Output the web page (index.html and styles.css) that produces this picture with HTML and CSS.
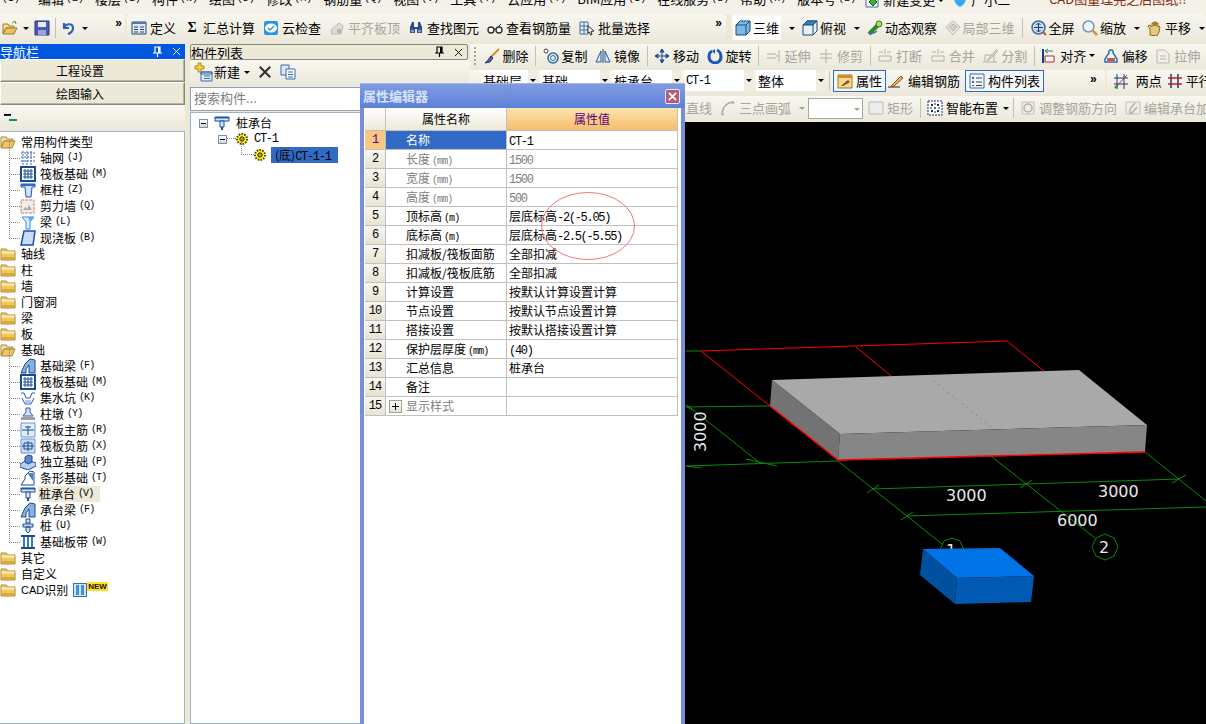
FILE: index.html
```html
<!DOCTYPE html>
<html lang="zh">
<head>
<meta charset="utf-8">
<title>属性编辑器</title>
<link rel="stylesheet" href="styles.css">
</head>
<body>
<svg class="sprite" xmlns="http://www.w3.org/2000/svg">
  <symbol id="f-open" viewBox="0 0 16 16"><path d="M1 3h5l1 2h6v2H4L1 13z" fill="#f6e3a0" stroke="#a8843a"/><path d="M1 14l3-7h11l-3 7z" fill="#efc463" stroke="#a8843a"/></symbol>
  <symbol id="f-closed" viewBox="0 0 16 16"><path d="M1 3h5l1 2h8v9H1z" fill="#f2c75c" stroke="#a88a3c"/><path d="M1.500 5.500h13v2h-13z" fill="#fbeeb8"/><path d="M2 11h12v2.500H2z" fill="#dca83a"/></symbol>
  <symbol id="i-grid" viewBox="0 0 16 16"><path d="M1 3h14M1 7h14M1 11h14M3 1v14M7 1v14M11 1v14" stroke="#3a68b8" fill="none" stroke-dasharray="2 1"/></symbol>
  <symbol id="i-raft" viewBox="0 0 16 16"><path d="M1 1h14v14H1z" fill="#fff" stroke="#1a4a90" stroke-width="2"/><path d="M3 5h10M3 8h10M3 11h10M5 3v10M8 3v10M11 3v10" stroke="#1a4a90"/></symbol>
  <symbol id="i-col" viewBox="0 0 16 16"><path d="M1 2h14v3h-3l-1 10H6L5 5H1z" fill="#cfe2f8" stroke="#1a5ab0"/><path d="M1 2h14v2H1z" fill="#2a6ac0"/></symbol>
  <symbol id="i-wall" viewBox="0 0 16 16"><path d="M1 2h13v13H1z" fill="#eee" stroke="#d08050" stroke-dasharray="3 1"/><path d="M3 12l2-3 2 2 2-4 3 5z" fill="#a8a8a8"/></symbol>
  <symbol id="i-beam" viewBox="0 0 16 16"><path d="M2 3h12l-4 5v7H6V8z" fill="#d8ebfb" stroke="#3a8ad8"/><path d="M8 3l5 0-3 5z" fill="#60a8e8"/></symbol>
  <symbol id="i-slab" viewBox="0 0 16 16"><path d="M4 1h11l-2 14H1z" fill="#c8ddf6" stroke="#1a50a8" stroke-width="1.500"/></symbol>
  <symbol id="i-fb" viewBox="0 0 16 16"><path d="M1 15l4-9 5-5 5 1v13H9V7l-3 4v4z" fill="#88b0e0" stroke="#1a4a90"/></symbol>
  <symbol id="i-sump" viewBox="0 0 16 16"><path d="M1 3h3l2 5h4l2-5h3M2 8l3 6h6l3-6" fill="none" stroke="#2a60b0"/><path d="M5 10h6v3H5z" fill="#b0c8e8"/></symbol>
  <symbol id="i-ped" viewBox="0 0 16 16"><path d="M6 2h4v4l3 4H3l3-4z" fill="#d8e4f4" stroke="#2a60b0"/><path d="M1 11h14v3H1z" fill="#a0a0a0"/></symbol>
  <symbol id="i-r1" viewBox="0 0 16 16"><path d="M1 1h14v14H1z" fill="#e0ecfa" stroke="#6a98d0"/><path d="M2 8h12M8 4v9M5 5h6" stroke="#1a4a90" fill="none"/></symbol>
  <symbol id="i-r2" viewBox="0 0 16 16"><path d="M1 1h14v14H1z" fill="#c8dcf4" stroke="#6a98d0"/><path d="M2 8h12M8 3v10M4 5h8v6H4z" stroke="#1a4a90" fill="none"/></symbol>
  <symbol id="i-iso" viewBox="0 0 16 16"><path d="M0 10l7-4 9 3v3l-8 4-8-3z" fill="#b8d0f0" stroke="#1a4a90"/><path d="M5 3l3-2 4 1v6l-4 2-3-2z" fill="#5a88c8" stroke="#1a4a90"/></symbol>
  <symbol id="i-strip" viewBox="0 0 16 16"><path d="M1 15l4-6V6l5-5 4 1v13z" fill="#fff" stroke="#1a4a90"/><path d="M8 3l5 0v8l-3-4z" fill="#4a80c8"/></symbol>
  <symbol id="i-cap" viewBox="0 0 16 16"><path d="M1 2h14v4H1z" fill="#d8e8fa" stroke="#1a4a90"/><path d="M1 2h14v1.500H1z" fill="#1a5ab0"/><path d="M6 6h4v6H6z" fill="#d8e8fa" stroke="#1a4a90"/><path d="M7 12h2v3H7z" fill="#1a4a90"/></symbol>
  <symbol id="i-pile" viewBox="0 0 16 16"><path d="M6 1h4v4H6zM3 6h10v3H3zM6 9h4v4l-2 2-2-2z" fill="#c8dcf4" stroke="#1a4a90"/></symbol>
  <symbol id="i-band" viewBox="0 0 16 16"><path d="M1 2h14M1 14h14" stroke="#1a4a90" stroke-width="2"/><path d="M4 3v10M8 3v10M12 3v10" stroke="#3a78c8" stroke-width="2"/></symbol>
  <symbol id="i-gear" viewBox="0 0 12 12"><circle cx="6" cy="6" r="5" fill="#ffff20" stroke="#504000" stroke-width="2" stroke-dasharray="1.600 1.200"/><circle cx="6" cy="6" r="2.200" fill="#c8a800" stroke="#302000"/></symbol>
  <symbol id="t-open" viewBox="0 0 16 16"><path d="M1 4h5l1 2h5v2H4L1 14z" fill="#f4dc96" stroke="#a07a30"/><path d="M1 14l3-6h11l-3 6z" fill="#ecc060" stroke="#a07a30"/><path d="M10 3l3-2 1 3" fill="none" stroke="#5a8a30"/></symbol>
  <symbol id="t-save" viewBox="0 0 16 16"><path d="M1 1h14v14H1z" fill="#4a5ab8" stroke="#2a3478"/><path d="M4 2h8v5H4z" fill="#e8ecf8"/><path d="M4 10h8v5H4z" fill="#9aa4d8"/></symbol>
  <symbol id="t-undo" viewBox="0 0 16 16"><path d="M3 3v5h5M3 8c2-5 9-5 9 0 0 3-2 5-5 6" fill="none" stroke="#2a62b8" stroke-width="2.200"/></symbol>
  <symbol id="t-def" viewBox="0 0 16 16"><path d="M1 2h14v12H1z" fill="#dfe8f4" stroke="#26486e"/><path d="M1 2h14v2H1z" fill="#5478a8"/><path d="M3 7h4M9 7h4M3 9.500h4M9 9.500h4M3 12h4M9 12h4" stroke="#26486e"/></symbol>
  <symbol id="t-cloud" viewBox="0 0 16 16"><path d="M1 3a2 2 0 0 1 2-2h10a2 2 0 0 1 2 2v10a2 2 0 0 1-2 2H3a2 2 0 0 1-2-2z" fill="#2a94e0"/><ellipse cx="8" cy="8" rx="6" ry="4.500" fill="#fff"/><path d="M5 8l2 2 4-4" fill="none" stroke="#2a94e0" stroke-width="1.500"/></symbol>
  <symbol id="t-align" viewBox="0 0 16 16"><path d="M2 10l8-7 4 3-2 8H3z" fill="#dcdcd4" stroke="#b8b8b0"/><path d="M8 9h4v4H8z" fill="#b8b8b0"/></symbol>
  <symbol id="t-bino" viewBox="0 0 16 16"><path d="M2 7l2-5h2v5h4V2h2l2 5v6h-5V9H7v4H2z" fill="#2a4a88"/><circle cx="4.500" cy="11" r="1.500" fill="#8ab0e0"/><circle cx="11.500" cy="11" r="1.500" fill="#8ab0e0"/></symbol>
  <symbol id="t-glass" viewBox="0 0 16 16"><circle cx="4" cy="10" r="3" fill="#fff" stroke="#303030" stroke-width="1.400"/><circle cx="12" cy="10" r="3" fill="#fff" stroke="#303030" stroke-width="1.400"/><path d="M7 9h2M11 7l3-3" stroke="#303030"/></symbol>
  <symbol id="t-batch" viewBox="0 0 16 16"><path d="M1 2h8v12H1zM1 6h8M1 10h8M5 2v12" fill="#eef2f8" stroke="#3a68a8"/><path d="M9 6l6 5-3 .500 1 3-1.500 .500-1-3-1.500 1z" fill="#fff" stroke="#303030"/></symbol>
  <symbol id="t-cube" viewBox="0 0 16 16"><path d="M1 5l4-4h10v10l-4 4H1z" fill="#7ab8e8" stroke="#1a4a78"/><path d="M1 5h10v10M11 5l4-4" fill="none" stroke="#1a4a78"/></symbol>
  <symbol id="t-top" viewBox="0 0 16 16"><path d="M1 5l4-4h10v10l-4 4H1z" fill="#e8f0fa" stroke="#1a4a78"/><path d="M1 5l4-4h10l-4 4z" fill="#3a80c8" stroke="#1a4a78"/><path d="M11 5v10M11 5l4-4" fill="none" stroke="#1a4a78"/></symbol>
  <symbol id="t-orbit" viewBox="0 0 16 16"><path d="M2 14l11-11" stroke="#2a8a30" stroke-width="4"/><circle cx="12" cy="4" r="3" fill="#b0e060" stroke="#3a7020"/><path d="M2 12c3 2 6 1 8-1" fill="none" stroke="#3a6ab0" stroke-width="1.500"/></symbol>
  <symbol id="t-local" viewBox="0 0 16 16"><path d="M1 7l7-6 7 6-7 8z" fill="#e8e8e0" stroke="#b8b8b0"/><path d="M4 7l4-3 4 3-4 4z" fill="#d0d0c8" stroke="#b8b8b0"/></symbol>
  <symbol id="t-full" viewBox="0 0 16 16"><circle cx="7.500" cy="7.500" r="6.500" fill="#c8dcf4" stroke="#4a6a98" stroke-width="1.500"/><path d="M7.500 3v9M3 7.500h9M7.500 3l-2 2M7.500 3l2 2M7.500 12l-2-2M7.500 12l2-2" stroke="#1a3a78" fill="none"/><path d="M12 12l3 3" stroke="#c05020" stroke-width="2"/></symbol>
  <symbol id="t-zoom" viewBox="0 0 16 16"><circle cx="6.500" cy="6.500" r="5.500" fill="#eef4fc" stroke="#7a94b8" stroke-width="1.500"/><path d="M10 10l5 5" stroke="#c89838" stroke-width="2.500"/></symbol>
  <symbol id="t-pan" viewBox="0 0 16 16"><path d="M3 15V9L1 6l2-1 2 2V3h2v3-4h2v4-3h2v4l1-1 1 1-1 5-2 4z" fill="#e8c880" stroke="#8a6820"/></symbol>
  <symbol id="t-del" viewBox="0 0 16 16"><path d="M15 1l-8 8" stroke="#d09030" stroke-width="2"/><path d="M7 8l2 2-3 4-5 1 1-1c2-1 2-3 5-6z" fill="#4a62a8" stroke="#2a3a78"/></symbol>
  <symbol id="t-copy" viewBox="0 0 16 16"><circle cx="3" cy="3" r="2" fill="#fff" stroke="#404040"/><circle cx="10" cy="10" r="5" fill="none" stroke="#2a68b0" stroke-width="1.500"/><circle cx="10" cy="10" r="2.500" fill="none" stroke="#2a68b0"/></symbol>
  <symbol id="t-mirror" viewBox="0 0 16 16"><path d="M8 1v14" stroke="#404040"/><path d="M6 3v11H1zM10 3v11h5z" fill="#dceafa" stroke="#1a58a8"/></symbol>
  <symbol id="t-move" viewBox="0 0 16 16"><path d="M8 1v14M1 8h14M8 1L6 4h4zM8 15l-2-3h4zM1 8l3-2v4zM15 8l-3-2v4z" stroke="#1a4a90" fill="#2a68b8"/></symbol>
  <symbol id="t-rot" viewBox="0 0 16 16"><path d="M5 3C1 5 1 12 5 14s9 0 9-5-2-6-4-7" fill="none" stroke="#1a58c0" stroke-width="3"/><path d="M8 1l-3 2 3 3z" fill="#1a58c0"/></symbol>
  <symbol id="t-ext" viewBox="0 0 16 16"><path d="M1 6h9M1 10h9M13 2v12M10 8h3" stroke="#b0b0a8" fill="none"/></symbol>
  <symbol id="t-trim" viewBox="0 0 16 16"><path d="M8 1v14M2 6h12M2 10h12" stroke="#b0b0a8" fill="none"/></symbol>
  <symbol id="t-brk" viewBox="0 0 16 16"><path d="M2 4h4M10 4h4M2 8h12v5H2z" stroke="#b0b0a8" fill="none"/><path d="M8 1v5" stroke="#b0b0a8"/></symbol>
  <symbol id="t-split" viewBox="0 0 16 16"><path d="M1 14h14M3 14V7h9v7" fill="none" stroke="#b0b0a8"/><path d="M15 1L7 10l-2 3 3-2 8-8" fill="#d8d8d0" stroke="#b0b0a8"/></symbol>
  <symbol id="t-alg" viewBox="0 0 16 16"><path d="M2 1v14" stroke="#1a3a88" stroke-width="2"/><path d="M4 3h8M7 1L4 3l3 2" stroke="#1a8a90" fill="none"/><path d="M4 8h9v6H4z" fill="#fff" stroke="#c02030"/></symbol>
  <symbol id="t-off" viewBox="0 0 16 16"><path d="M8 2a2 2 0 0 1 2 3l4 6v3H2v-3l4-6a2 2 0 0 1 2-3z" fill="#fff" stroke="#2a68b0" stroke-width="1.500"/><path d="M4 10h8v3H4z" fill="#d85040"/></symbol>
  <symbol id="t-str" viewBox="0 0 16 16"><path d="M2 2h8l4 4v9H2z" fill="#f0f0e8" stroke="#b8b8b0"/><path d="M5 8h6M5 11h6" stroke="#b8b8b0"/></symbol>
  <symbol id="t-prop" viewBox="0 0 16 16"><path d="M1 2h14v13H1z" fill="#f8d890" stroke="#a07820"/><path d="M1 2h14v3H1z" fill="#c89028"/><path d="M4 13l7-6 2 2-7 4z" fill="#705020"/></symbol>
  <symbol id="t-pen" viewBox="0 0 16 16"><path d="M0 14h12" stroke="#202020"/><path d="M4 12l9-9 2 2-9 8-3 1z" fill="#f0b860" stroke="#805020"/></symbol>
  <symbol id="t-list" viewBox="0 0 16 16"><path d="M1 1h14v14H1z" fill="#f4f8fc" stroke="#3a6aa8"/><path d="M3 4h2v2H3zM3 8h2v2H3zM3 12h2v1H3z" fill="#3a6aa8"/><path d="M7 5h6M7 9h6M7 12.500h6" stroke="#404040"/></symbol>
  <symbol id="t-two" viewBox="0 0 16 16"><path d="M4 1v15M11 1v15M1 5h14M1 11h14" stroke="#1a3a78"/><path d="M2 15L14 2" stroke="#d02020"/><circle cx="3" cy="14" r="1.500" fill="#20a020"/></symbol>
  <symbol id="t-par" viewBox="0 0 16 16"><path d="M4 1v14M11 1v14" stroke="#1a3a78" stroke-width="1.500"/><path d="M1 5h14M1 11h14" stroke="#c02020" stroke-width="1.500"/></symbol>
  <symbol id="t-arc" viewBox="0 0 16 16"><path d="M2 15C2 8 6 3 13 2" fill="none" stroke="#a8a8a0" stroke-width="1.500"/><circle cx="2.500" cy="14" r="1.500" fill="#b8b8b0"/><circle cx="13" cy="2.500" r="1.500" fill="#b8b8b0"/></symbol>
  <symbol id="t-rect" viewBox="0 0 16 16"><path d="M1 2h14v12H1z" fill="#ececec" stroke="#b8b8b0"/></symbol>
  <symbol id="t-smart" viewBox="0 0 16 16"><path d="M1 1h14v14H1z" fill="#fff" stroke="#103070" stroke-dasharray="2 1"/><path d="M8 3v10M3 8h10" stroke="#303030" stroke-dasharray="2 2"/><path d="M4 4h2v2H4zM10 4h2v2h-2zM4 10h2v2H4zM10 10h2v2h-2z" fill="#103070"/></symbol>
  <symbol id="t-adj" viewBox="0 0 16 16"><path d="M2 2h12v12H2z" fill="#eeeee6" stroke="#c0c0b8"/><circle cx="8" cy="8" r="4" fill="none" stroke="#b0b0a8" stroke-width="1.500"/></symbol>
  <symbol id="t-edit" viewBox="0 0 16 16"><path d="M1 2h14v12H1z" fill="#eeeee6" stroke="#c0c0b8"/><path d="M10 3L5 9v4h2l5-6" fill="none" stroke="#b0b0a8" stroke-width="1.500"/></symbol>
  <symbol id="t-new" viewBox="0 0 20 20"><path d="M5 1h3v3h3v3H8v3H5V7H2V4h3z" fill="#f0d040" stroke="#a89020"/><path d="M8 10h11v9H8z" fill="#e0ecf8" stroke="#3a6aa8"/><path d="M8 10h11v2H8zM11 14h6M11 16.500h6" stroke="#3a6aa8" fill="none"/></symbol>
  <symbol id="t-x" viewBox="0 0 16 16"><path d="M2 2l12 12M14 2L2 14" stroke="#303030" stroke-width="2.400"/></symbol>
  <symbol id="t-dup" viewBox="0 0 16 16"><path d="M1 1h8v10H1z" fill="#dce8f8" stroke="#3a6aa8"/><path d="M6 5h9v10H6z" fill="#fff" stroke="#3a6aa8"/><path d="M8 8h5M8 10.500h5M8 13h5" stroke="#3a6aa8"/></symbol>
  <symbol id="t-var" viewBox="0 0 16 16"><path d="M2 1h9l3 3v11H2z" fill="#fff" stroke="#3a6aa8"/><path d="M9 6l4 4-4 4-4-4z" fill="#40b030" stroke="#206018"/></symbol>
  <symbol id="t-bot" viewBox="0 0 16 16"><path d="M2 2h12c1 5-1 11-6 13C3 13 1 7 2 2z" fill="#38a8f0"/><circle cx="5.500" cy="6.500" r="1.200" fill="#fff"/><circle cx="10.500" cy="6.500" r="1.200" fill="#fff"/></symbol>
  <symbol id="i-nav" viewBox="0 0 16 16"><path d="M1 3h7v2H1z" fill="#103838"/><path d="M1 3h7v1H1z" fill="#000"/><path d="M6 8h8v2H6z" fill="#108878"/></symbol>
  <symbol id="i-pin" viewBox="0 0 10 12"><path d="M3 1h5v6H3zM1 7h9M5.500 7v4" fill="none" stroke="currentColor" stroke-width="1.200"/><path d="M6 1h2v6H6z" fill="currentColor"/></symbol>
  <symbol id="i-close" viewBox="0 0 10 10"><path d="M1 1l8 8M9 1l-8 8" stroke="currentColor" fill="none"/></symbol>
</svg>

<div class="app">
  <div class="menubar">
    <span class="mi mi-first"><span class="m">(I)</span></span>
    <span class="mi">编辑<span class="m">(E)</span></span>
    <span class="mi">楼层<span class="m">(L)</span></span>
    <span class="mi">构件<span class="m">(N)</span></span>
    <span class="mi">绘图<span class="m">(D)</span></span>
    <span class="mi">修改<span class="m">(M)</span></span>
    <span class="mi">钢筋量<span class="m">(Q)</span></span>
    <span class="mi">视图<span class="m">(V)</span></span>
    <span class="mi">工具<span class="m">(T)</span></span>
    <span class="mi">云应用<span class="m">(Y)</span></span>
    <span class="mi">BIM应用<span class="m">(I)</span></span>
    <span class="mi">在线服务<span class="m">(S)</span></span>
    <span class="mi">帮助<span class="m">(H)</span></span>
    <span class="mi">版本号<span class="m">(B)</span></span>
    <span class="mi mi-ic"><svg class="ic"><use href="#t-var"/></svg>新建变更<span class="drop"></span></span>
    <span class="mi mi-ic"><svg class="ic"><use href="#t-bot"/></svg>广小二</span>
    <span class="notice">CAD图量理完之后图纸!!</span>
  </div>

  <div class="topbar">
    <div class="band b-file">
      <svg class="ic ml2"><use href="#t-open"/></svg><span class="drop"></span>
      <svg class="ic"><use href="#t-save"/></svg><span class="vsep"></span>
      <svg class="ic"><use href="#t-undo"/></svg><span class="drop"></span>
      <span class="more more-file">»</span>
    </div>
    <div class="band b-main">
      <span class="ti"><svg class="ic"><use href="#t-def"/></svg>定义</span>
      <span class="ti"><span class="sigma">Σ</span>汇总计算</span>
      <span class="ti"><svg class="ic"><use href="#t-cloud"/></svg>云检查</span>
      <span class="ti off"><svg class="ic"><use href="#t-align"/></svg>平齐板顶</span>
      <span class="ti"><svg class="ic"><use href="#t-bino"/></svg>查找图元</span>
      <span class="ti"><svg class="ic"><use href="#t-glass"/></svg>查看钢筋量</span>
      <span class="ti"><svg class="ic"><use href="#t-batch"/></svg>批量选择</span>
      <span class="more more-end">»</span>
    </div>
    <div class="band b-view">
      <span class="ti pressed"><svg class="ic"><use href="#t-cube"/></svg>三维</span><span class="drop"></span>
      <span class="ti"><svg class="ic"><use href="#t-top"/></svg>俯视</span><span class="drop"></span>
      <span class="ti"><svg class="ic"><use href="#t-orbit"/></svg>动态观察</span>
      <span class="ti off"><svg class="ic"><use href="#t-local"/></svg>局部三维</span>
      <span class="vsep"></span>
      <span class="ti"><svg class="ic"><use href="#t-full"/></svg>全屏</span>
      <span class="ti"><svg class="ic"><use href="#t-zoom"/></svg>缩放</span><span class="drop"></span>
      <span class="ti"><svg class="ic"><use href="#t-pan"/></svg>平移</span><span class="drop"></span>
    </div>
  </div>

  <div class="work">
    <aside class="nav">
      <div class="panel-title active"><span class="pt">导航栏</span><svg class="pin"><use href="#i-pin"/></svg><svg class="cls"><use href="#i-close"/></svg></div>
      <button class="navbtn" type="button">工程设置</button>
      <button class="navbtn" type="button">绘图输入</button>
      <div class="navstrip"><svg class="ic"><use href="#i-nav"/></svg></div>
      <div class="navtree">
        <div class="tr"><svg class="ic"><use href="#f-open"/></svg>常用构件类型</div>
        <div class="tr ch"><svg class="ic"><use href="#i-grid"/></svg>轴网<span class="k">(J)</span></div>
        <div class="tr ch"><svg class="ic"><use href="#i-raft"/></svg>筏板基础<span class="k">(M)</span></div>
        <div class="tr ch"><svg class="ic"><use href="#i-col"/></svg>框柱<span class="k">(Z)</span></div>
        <div class="tr ch"><svg class="ic"><use href="#i-wall"/></svg>剪力墙<span class="k">(Q)</span></div>
        <div class="tr ch"><svg class="ic"><use href="#i-beam"/></svg>梁<span class="k">(L)</span></div>
        <div class="tr ch last"><svg class="ic"><use href="#i-slab"/></svg>现浇板<span class="k">(B)</span></div>
        <div class="tr"><svg class="ic"><use href="#f-closed"/></svg>轴线</div>
        <div class="tr"><svg class="ic"><use href="#f-closed"/></svg>柱</div>
        <div class="tr"><svg class="ic"><use href="#f-closed"/></svg>墙</div>
        <div class="tr"><svg class="ic"><use href="#f-closed"/></svg>门窗洞</div>
        <div class="tr"><svg class="ic"><use href="#f-closed"/></svg>梁</div>
        <div class="tr"><svg class="ic"><use href="#f-closed"/></svg>板</div>
        <div class="tr"><svg class="ic"><use href="#f-open"/></svg>基础</div>
        <div class="tr ch"><svg class="ic"><use href="#i-fb"/></svg>基础梁<span class="k">(F)</span></div>
        <div class="tr ch"><svg class="ic"><use href="#i-raft"/></svg>筏板基础<span class="k">(M)</span></div>
        <div class="tr ch"><svg class="ic"><use href="#i-sump"/></svg>集水坑<span class="k">(K)</span></div>
        <div class="tr ch"><svg class="ic"><use href="#i-ped"/></svg>柱墩<span class="k">(Y)</span></div>
        <div class="tr ch"><svg class="ic"><use href="#i-r1"/></svg>筏板主筋<span class="k">(R)</span></div>
        <div class="tr ch"><svg class="ic"><use href="#i-r2"/></svg>筏板负筋<span class="k">(X)</span></div>
        <div class="tr ch"><svg class="ic"><use href="#i-iso"/></svg>独立基础<span class="k">(P)</span></div>
        <div class="tr ch"><svg class="ic"><use href="#i-strip"/></svg>条形基础<span class="k">(T)</span></div>
        <div class="tr ch"><svg class="ic"><use href="#i-cap"/></svg><span class="hl">桩承台<span class="k">(V)</span></span></div>
        <div class="tr ch"><svg class="ic"><use href="#i-fb"/></svg>承台梁<span class="k">(F)</span></div>
        <div class="tr ch"><svg class="ic"><use href="#i-pile"/></svg>桩<span class="k">(U)</span></div>
        <div class="tr ch last"><svg class="ic"><use href="#i-band"/></svg>基础板带<span class="k">(W)</span></div>
        <div class="tr"><svg class="ic"><use href="#f-closed"/></svg>其它</div>
        <div class="tr"><svg class="ic"><use href="#f-closed"/></svg>自定义</div>
        <div class="tr"><svg class="ic"><use href="#f-closed"/></svg><span class="cad">CAD</span>识别<span class="cadbox"><i></i><i></i></span><span class="newtag">NEW</span></div>
      </div>
    </aside>

    <section class="list">
      <div class="panel-title plain"><span class="pt">构件列表</span><svg class="pin"><use href="#i-pin"/></svg><svg class="cls"><use href="#i-close"/></svg></div>
      <div class="listbar">
        <svg class="ic20"><use href="#t-new"/></svg><span class="newlbl">新建</span><span class="drop"></span>
        <svg class="ic"><use href="#t-x"/></svg>
        <svg class="ic"><use href="#t-dup"/></svg>
      </div>
      <div class="search">搜索构件...</div>
      <div class="listtree">
        <div class="lr l0"><span class="box"></span><svg class="ic"><use href="#i-cap"/></svg><span>桩承台</span></div>
        <div class="lr l1"><span class="box"></span><svg class="gear"><use href="#i-gear"/></svg><span class="mono">CT-1</span></div>
        <div class="lr l2"><svg class="gear"><use href="#i-gear"/></svg><span class="sel-item">(底)<span class="mono">CT-1-1</span></span></div>
      </div>
    </section>

    <section class="right">
      <div class="rowbar r2">
        <span class="grip"></span>
        <span class="ti"><svg class="ic"><use href="#t-del"/></svg>删除</span><span class="vsep"></span>
        <span class="ti"><svg class="ic"><use href="#t-copy"/></svg>复制</span>
        <span class="ti"><svg class="ic"><use href="#t-mirror"/></svg>镜像</span><span class="vsep"></span>
        <span class="ti"><svg class="ic"><use href="#t-move"/></svg>移动</span>
        <span class="ti"><svg class="ic"><use href="#t-rot"/></svg>旋转</span><span class="vsep"></span>
        <span class="ti off"><svg class="ic"><use href="#t-ext"/></svg>延伸</span>
        <span class="ti off"><svg class="ic"><use href="#t-trim"/></svg>修剪</span><span class="vsep"></span>
        <span class="ti off"><svg class="ic"><use href="#t-brk"/></svg>打断</span>
        <span class="ti off"><svg class="ic"><use href="#t-brk"/></svg>合并</span>
        <span class="ti off"><svg class="ic"><use href="#t-split"/></svg>分割</span><span class="vsep"></span>
        <span class="ti"><svg class="ic"><use href="#t-alg"/></svg>对齐<span class="drop"></span></span>
        <span class="ti"><svg class="ic"><use href="#t-off"/></svg>偏移</span>
        <span class="ti off"><svg class="ic"><use href="#t-str"/></svg>拉伸</span>
      </div>
      <div class="rowbar r3">
        <span class="sel s1">基础层<span class="arrow"></span></span>
        <span class="sel s2">基础<span class="arrow"></span></span>
        <span class="sel s2">桩承台<span class="arrow"></span></span>
        <span class="sel s2"><span class="mono">CT-1</span><span class="arrow"></span></span>
        <span class="sel s2">整体<span class="arrow"></span></span>
        <span class="vsep"></span>
        <span class="ti act"><svg class="ic"><use href="#t-prop"/></svg>属性</span>
        <span class="ti tight"><svg class="ic"><use href="#t-pen"/></svg>编辑钢筋</span>
        <span class="ti act"><svg class="ic"><use href="#t-list"/></svg>构件列表</span>
        <span class="more more-r3">»</span>
        <span class="bandgap"></span>
        <span class="ti wide"><svg class="ic"><use href="#t-two"/></svg>两点</span>
        <span class="ti"><svg class="ic"><use href="#t-par"/></svg>平行</span>
      </div>
      <div class="rowbar r4">
        <span class="ti off">直线</span>
        <span class="ti off"><svg class="ic"><use href="#t-arc"/></svg>三点画弧<span class="drop dis"></span></span>
        <span class="sel s3"><span class="arrow dis"></span></span>
        <span class="ti off"><svg class="ic"><use href="#t-rect"/></svg>矩形</span><span class="vsep"></span>
        <span class="ti"><svg class="ic"><use href="#t-smart"/></svg>智能布置<span class="drop"></span></span><span class="vsep"></span>
        <span class="ti off"><svg class="ic"><use href="#t-adj"/></svg>调整钢筋方向</span>
        <span class="ti off"><svg class="ic"><use href="#t-edit"/></svg>编辑承台加</span>
      </div>
      <div class="canvas">
        <svg class="scene" viewBox="470 122 736 602" xmlns="http://www.w3.org/2000/svg">
          <g class="gl">
            <path d="M686 351L701 351M686 407L770 406M686 466L838 461M687 405L760 463M746 459L777 466M686 466L701 468"/>
            <path d="M838 461L942 544M992 457L1095 538M1145 452L1206 501M873 489L1180 479M907 516L1206 507"/>
            <path d="M867 493L879 485M1020 488L1032 480M1172 483L1186 475M901 520L913 512M683 404L692 410"/>
            <polygon points="1105,534 1114,538 1118,547 1114,556 1105,560 1096,556 1092,547 1096,538"/>
            <polygon points="952,538 960,541 964,550 960,559 952,562 944,559 940,550 944,541"/>
          </g>
          <g class="rd">
            <path d="M701 351L1007 341L1044 371M856 347L891 376M701 351L770 406L838 460L1145 452"/>
          </g>
          <polygon points="772,380 1079,370 1147,425 840,434" fill="#a9a9a9"/>
          <polygon points="772,380 840,434 838,460 770,406" fill="#737373"/>
          <polygon points="840,434 1147,425 1145,452 838,460" fill="#868686"/>
          <path d="M934 381L995 430" class="dots"/>
          <path d="M770 406L838 460L1145 452" class="rd rd2"/>
          <text class="lb" x="946" y="501">3000</text>
          <text class="lb" x="1098" y="497">3000</text>
          <text class="lb" x="1057" y="526">6000</text>
          <text class="lb" x="1099" y="553">2</text>
          <text class="lb" x="946" y="556">1</text>
          <text class="lb" transform="translate(706 452) rotate(-90)">3000</text>
          <polygon points="923,549 1000,548 1034,576 957,578" fill="#0073e6"/>
          <polygon points="923,549 957,578 955,604 920,575" fill="#0050a0"/>
          <polygon points="957,578 1034,576 1031,602 955,604" fill="#005ab4"/>
        </svg>
      </div>
    </section>
  </div>

  <div class="dialog">
    <div class="dlg-title"><span>属性编辑器</span><span class="dlg-x"><svg><use href="#i-close"/></svg></span></div>
    <div class="dlg-body">
      <table class="props">
        <colgroup><col class="c0"><col class="c1"><col class="c2"></colgroup>
        <thead><tr><th></th><th>属性名称</th><th class="hv">属性值</th></tr></thead>
        <tbody>
          <tr class="cur"><td class="n">1</td><td class="p">名称</td><td class="v"><span class="mono">CT-1</span></td></tr>
          <tr class="ro"><td class="n">2</td><td class="p">长度<span class="k">(mm)</span></td><td class="v"><span class="mono">1500</span></td></tr>
          <tr class="ro"><td class="n">3</td><td class="p">宽度<span class="k">(mm)</span></td><td class="v"><span class="mono">1500</span></td></tr>
          <tr class="ro"><td class="n">4</td><td class="p">高度<span class="k">(mm)</span></td><td class="v"><span class="mono">500</span></td></tr>
          <tr><td class="n">5</td><td class="p">顶标高<span class="k">(m)</span></td><td class="v">层底标高<span class="mono">-2(-5.05)</span></td></tr>
          <tr><td class="n">6</td><td class="p">底标高<span class="k">(m)</span></td><td class="v">层底标高<span class="mono">-2.5(-5.55)</span></td></tr>
          <tr><td class="n">7</td><td class="p">扣减板/筏板面筋</td><td class="v">全部扣减</td></tr>
          <tr><td class="n">8</td><td class="p">扣减板/筏板底筋</td><td class="v">全部扣减</td></tr>
          <tr><td class="n">9</td><td class="p">计算设置</td><td class="v">按默认计算设置计算</td></tr>
          <tr><td class="n">10</td><td class="p">节点设置</td><td class="v">按默认节点设置计算</td></tr>
          <tr><td class="n">11</td><td class="p">搭接设置</td><td class="v">按默认搭接设置计算</td></tr>
          <tr><td class="n">12</td><td class="p">保护层厚度<span class="k">(mm)</span></td><td class="v"><span class="mono">(40)</span></td></tr>
          <tr><td class="n">13</td><td class="p">汇总信息</td><td class="v">桩承台</td></tr>
          <tr><td class="n">14</td><td class="p">备注</td><td class="v"></td></tr>
          <tr class="ro"><td class="n">15</td><td class="p"><span class="plus"></span>显示样式</td><td class="v"></td></tr>
        </tbody>
      </table>
    </div>
    <svg class="mark" viewBox="0 0 96 70"><ellipse cx="48" cy="35" rx="46.500" ry="33.500"/></svg>
  </div>
</div>
</body>
</html>
```
FILE: styles.css
```css
* { box-sizing: border-box; }
html, body { margin: 0; padding: 0; background: #ece9d8; }
body { font: 13px/16px "Noto Sans CJK SC", "Liberation Sans", sans-serif; color: #000; }
.sprite { position: absolute; width: 0; height: 0; overflow: hidden; }
.app { position: relative; width: 1206px; height: 724px; overflow: hidden; background: #ece9d8; display: flex; flex-direction: column; }
.ic { width: 16px; height: 16px; flex: none; display: block; }
.ic20 { width: 20px; height: 20px; flex: none; display: block; }
.m { font: 10px/16px "Liberation Mono", monospace; margin-left: 2px; }
.k { font: 10px/16px "Liberation Mono", monospace; letter-spacing: -.9px; margin-left: 2px; }
.mono { font: 12px/16px "Liberation Mono", monospace; letter-spacing: -1.300px; }
.ml2 { margin-left: 2px; }

/* menu */
.menubar { height: 14px; flex: none; display: flex; align-items: flex-start; gap: 11px; background: #f4f2e8; overflow: hidden; white-space: nowrap; position: relative; }
.mi { display: flex; align-items: center; margin-top: -9px; height: 16px; line-height: 16px; }
.mi-first { width: 27px; }
.mi-ic { gap: 3px; margin-top: -8px; }
.mi-ic:nth-last-child(3) { margin-left: -3px; }
.mi-ic:nth-last-child(2) { margin-left: -3px; }
.notice { position: absolute; left: 1049px; top: -9px; font-size: 13px; color: #8a2a10; }

/* bands */
.topbar { height: 30px; flex: none; display: flex; gap: 2px; }
.band { height: 28px; display: flex; align-items: center; background: linear-gradient(#f8f7f0, #ebe8da); border-radius: 3px; white-space: nowrap; }
.b-file { width: 125px; flex: none; gap: 5px; }
.b-main { width: 599px; flex: none; padding-left: 4px; gap: 8px; }
.b-view { flex: 1; min-width: 0; padding-left: 2px; gap: 7.500px; margin-left: 3px; }
.ti { display: flex; align-items: center; gap: 3px; height: 22px; white-space: nowrap; flex: none; }
.b-view .ti { gap: 2px; }
.ti.off { color: #a6a49a; }
.sigma { width: 16px; text-align: center; font: bold 14px/16px "Liberation Serif", serif; }
.more { font: bold 12px/12px "Liberation Sans", sans-serif; align-self: flex-start; margin-top: 3px; }
.more-file { margin-left: auto; margin-right: 3px; }
.more-end { margin-left: auto; margin-right: 4px; }
.drop { width: 6px; height: 0; flex: none; border: 3px solid transparent; border-top: 3px solid #000; border-bottom: 0; }
.drop.dis { border-top-color: #a6a49a; margin-left: 5px; }
.vsep { width: 1px; height: 20px; flex: none; background: #c4c1b0; }
.pressed { background: #fff; padding: 0 2px; height: 24px; }

/* main */
.work { flex: 1; display: flex; min-height: 0; }
.nav { width: 185px; flex: none; display: flex; flex-direction: column; }
.panel-title { height: 15px; flex: none; display: flex; align-items: center; overflow: hidden; }
.panel-title .pt { flex: 1; font-size: 13px; line-height: 15px; }
.panel-title.active { background: #0058e0; color: #fff; }
.panel-title.plain { background: #ece9d8; border: 1px solid #8a8878; border-radius: 2px; height: 16px; margin-right: 2px; }
.pin { width: 10px; height: 12px; margin-right: 10px; flex: none; }
.cls { width: 9px; height: 9px; margin-right: 4px; flex: none; }
.navbtn { height: 23px; flex: none; font: 12px/18px "Noto Sans CJK SC", sans-serif; background: #ece9d8; color: #000; padding: 0 25px 0 0; border: 1px solid; border-color: #fff #8a8878 #8a8878 #fff; box-shadow: inset -1px -1px 0 #b8b5a4; }
.navstrip { height: 26px; flex: none; padding: 6px 0 0 3px; background: linear-gradient(#f8f7f0, #ebe8da); }
.navtree { flex: 1; background: #fff; border: 1px solid #9eb2c8; border-left: 0; font-size: 12px; padding-top: 2px; overflow: hidden; }
.tr { position: relative; display: flex; align-items: center; gap: 5px; height: 16px; white-space: nowrap; }
.tr.ch { padding-left: 20px; gap: 4px; }
.tr .k { margin-left: -1px; }
.tr.ch::before { content: ""; position: absolute; left: 9px; top: -8px; height: 16px; width: 10px; border-left: 1px dotted #8a8a80; border-bottom: 1px dotted #8a8a80; }
.hl { background: #ece9d8; display: flex; align-items: center; height: 16px; padding: 0 7px 0 1px; margin-left: -2px; gap: 3px; }
.hl .k { margin-left: 0; }
.cad { font: 11px/16px "Liberation Sans", sans-serif; margin-right: -5px; }
.cadbox { width: 14px; height: 14px; border: 1px solid #4a6a98; background: #cfe4fa; display: flex; gap: 2px; padding: 1px 2px; flex: none; }
.cadbox i { flex: 1; background: #4090e0; }
.newtag { font: bold 8px/9px "Liberation Sans", sans-serif; background: #ffe020; color: #101010; padding: 0 1px; align-self: flex-start; margin-left: -5px; }

.list { width: 280px; margin-left: 5px; flex: none; display: flex; flex-direction: column; }
.listbar { height: 26px; flex: none; display: flex; align-items: center; padding: 0 0 2px 3px; background: linear-gradient(#f8f7f0, #ebe8da); border-radius: 3px; }
.newlbl { margin-left: 1px; }
.listbar .drop { margin: 0 8px 0 4px; }
.listbar .ic { width: 14px; height: 14px; }
.listbar .ic + .ic { margin-left: 8px; width: 16px; height: 16px; }
.search { height: 24px; flex: none; margin-top: 1px; background: #fff; border: 1px solid #8aa0b8; color: #808080; font-size: 13px; line-height: 20px; padding-left: 3px; }
.listtree { flex: 1; margin-top: 1px; background: #fff; border: 1px solid #9eb2c8; font-size: 12px; padding-top: 2px; }
.lr { position: relative; display: flex; align-items: center; height: 16px; white-space: nowrap; }
.box { width: 9px; height: 9px; flex: none; border: 1px solid #7a90a8; background: linear-gradient(#fff, #d8d4c4); position: relative; }
.box::after { content: ""; position: absolute; left: 1px; right: 1px; top: 3px; height: 1px; background: #000; }
.l0 { padding-left: 8px; gap: 6px; }
.l1 { padding-left: 27px; }
.l1 .gear { margin-left: 9px; margin-right: 6px; }
.l2 { padding-left: 63px; }
.l1::before { content: ""; position: absolute; left: 36px; top: 7px; width: 9px; border-top: 1px dotted #8a8a80; }
.l2::before { content: ""; position: absolute; left: 50px; top: -6px; height: 13px; width: 12px; border-left: 1px dotted #8a8a80; border-bottom: 1px dotted #8a8a80; }
.gear { width: 12px; height: 12px; flex: none; }
.l2 .gear { margin-right: 5px; }
.sel-item { background: #316ac5; color: #000; height: 16px; padding: 0 6px 0 4px; width: 67px; }

.right { flex: 1; display: flex; flex-direction: column; min-width: 0; }
.rowbar { height: 26px; flex: none; display: flex; align-items: center; white-space: nowrap; overflow: hidden; background: linear-gradient(#f8f7f0, #ebe8da); }
.r2 { padding: 0 0 3px 4px; gap: 7.500px; }
.r2 .vsep { margin: 0 -1px; }
.grip { width: 2px; height: 18px; flex: none; border-left: 2px dotted #a8a698; }
.r3 { padding: 0 0 5px 11px; gap: 2px; }
.sel { height: 21px; background: #fff; display: flex; align-items: center; justify-content: space-between; padding-left: 2px; flex: none; }
.s1 { width: 57px; }
.s2 { width: 70px; }
.s3 { width: 55px; height: 21px; border: 1px solid #a8a698; justify-content: flex-end; margin: 0 -3px 0 -5px; }
.arrow { width: 10px; height: 100%; flex: none; background: #f0eee2; position: relative; }
.arrow::after { content: ""; position: absolute; left: 2px; top: 9px; border: 3px solid transparent; border-top: 3px solid #000; border-bottom: 0; }
.arrow.dis { background: none; }
.arrow.dis::after { border-top-color: #a6a49a; }
.r3 .vsep { margin: 0 1px; }
.act { border: 1px solid #316ac5; background: #f4f6f8; padding: 0 3px; gap: 3px; }
.tight { gap: 4px; margin: 0 3px 0 0; }
.more-r3 { margin-left: 44px; }
.bandgap { width: 2px; height: 26px; background: #ece9d8; margin: 0 4px 0 6px; flex: none; }
.r3 .wide { gap: 7px; margin-right: 3px; }
.r4 { padding: 0 0 2px 216px; gap: 8px; }
.r4 .vsep { margin: 0 -2px 0 -1px; }
.r4 .ti .drop:not(.dis) { margin: 0 -3px 0 2px; }
.canvas { flex: 1; background: #000; position: relative; min-height: 0; }
.scene { display: block; width: 100%; height: 100%; }
.gl { fill: none; stroke: #0a8a0a; stroke-width: 1; }
.rd { fill: none; stroke: #ff0000; stroke-width: 1; }
.rd2 { stroke-width: 1.400; }
.dots { fill: none; stroke: #6a6a6a; stroke-width: 1; stroke-dasharray: 1 5; }
.lb { font: 16px "DejaVu Sans", sans-serif; fill: #e8e8e8; }

/* dialog */
.dialog { position: absolute; left: 360px; top: 83px; width: 325px; height: 660px; background: #7a8ed8; padding: 0 4px; border-top: 1px solid #a8b8ec; }
.dlg-title { height: 24px; margin: 0 -4px; display: flex; align-items: center; justify-content: space-between; padding: 0 5px 0 3px; background: linear-gradient(#7f9ce0, #5d80d8); color: #d8e2fa; font-weight: bold; font-size: 13px; }
.dlg-x { width: 15px; height: 15px; background: #b85a7a; border: 1px solid #e8e8f8; border-radius: 2px; color: #fff; display: flex; align-items: center; justify-content: center; }
.dlg-x svg { width: 9px; height: 9px; stroke-width: 2; }
.dlg-body { background: #fff; padding: 0 3px 0 1px; height: 620px; }
.props { border-collapse: separate; border-spacing: 0; table-layout: fixed; width: 313px; font-size: 12px; }
.c0 { width: 21px; }
.c1 { width: 121px; }
.c2 { width: 171px; }
.props th { height: 23px; padding: 0; font-weight: normal; font-size: 12px; background: linear-gradient(#fff, #ece9d8); border: 1px solid #c0c0c0; border-top: 0; border-left: 0; }
.props th.hv { background: linear-gradient(#fce4ae, #f5bd6b); color: #60007a; }
.props td { height: 19px; padding: 0 2px; border: 1px solid #c0c0c0; border-left: 0; border-top: 0; white-space: nowrap; overflow: hidden; line-height: 16px; }
.props .k, .props .mono { line-height: 12px; }
.props td.n { text-align: center; padding: 0; font: 12px/16px "Liberation Mono", monospace; letter-spacing: -1px; background: linear-gradient(#f8f7f0, #e6e3d3); color: #000; }
.props td.p { padding-left: 20px; }
.props .ro td.p, .props .ro td.v { color: #808080; }
.props .cur td.p { background: #316ac5; color: #fff; }
.props .cur td.n { background: #f8c880; color: #60007a; }
.plus { position: absolute; width: 13px; height: 13px; margin: 2px 0 0 -17px; border: 1px solid #a0a090; background: linear-gradient(#fff, #e6e3d3); }
.plus::before { content: ""; position: absolute; left: 2px; right: 2px; top: 5px; height: 1px; background: #000; }
.plus::after { content: ""; position: absolute; top: 2px; bottom: 2px; left: 5px; width: 1px; background: #000; }
.mark { position: absolute; left: 180px; top: 107px; width: 96px; height: 70px; pointer-events: none; }
.mark ellipse { fill: none; stroke: #f07878; stroke-width: 1; }
```
